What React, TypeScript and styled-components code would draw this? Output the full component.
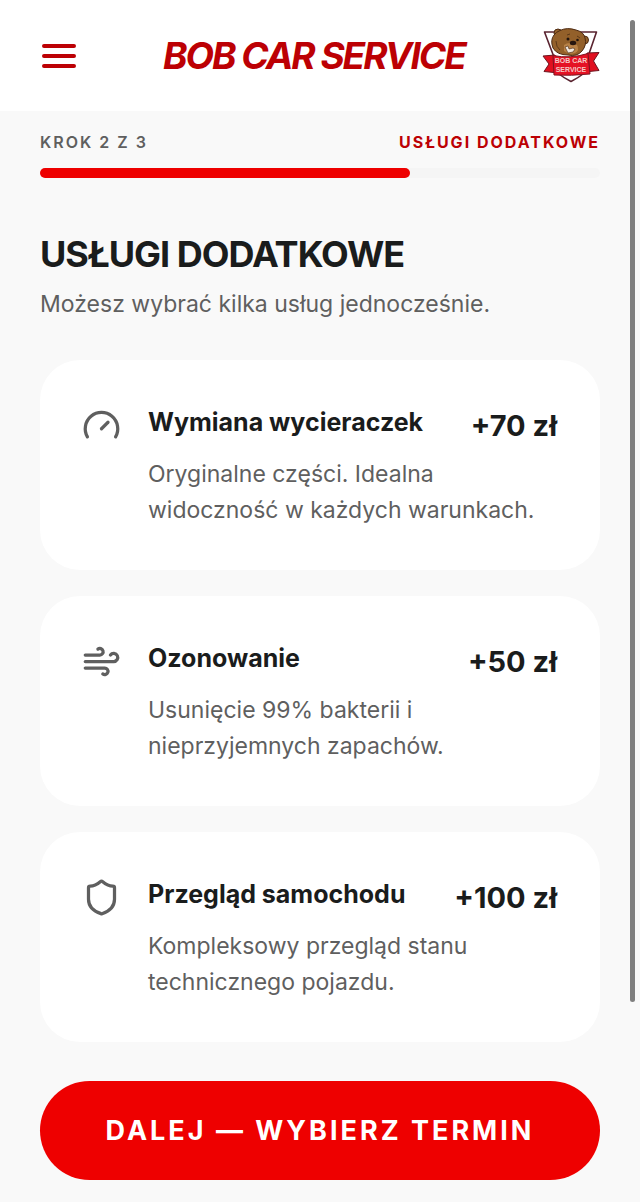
import { Gauge, LucideIcon, Shield, Wind } from 'lucide-react';
import React, { useState } from 'react';
import styled, { createGlobalStyle, ThemeProvider } from 'styled-components';

const theme = {
  colors: {
    background: '#f9f9f9',
    surface: '#ffffff',
    track: '#f5f5f5',
    primary: '#ee0000',
    primary_dark: '#bc0004',
    text: '#1a1c1c',
    muted: '#5f5f5f',
    thumb: '#7f7f7f',
  },
};

interface Service {
  id: string;
  icon: LucideIcon;
  name: string;
  description: string;
  price: number;
}

const services: Service[] = [
  {
    id: 'wipers',
    icon: Gauge,
    name: 'Wymiana wycieraczek',
    description: 'Oryginalne części. Idealna widoczność w każdych warunkach.',
    price: 70,
  },
  {
    id: 'ozone',
    icon: Wind,
    name: 'Ozonowanie',
    description: 'Usunięcie 99% bakterii i nieprzyjemnych zapachów.',
    price: 50,
  },
  {
    id: 'inspection',
    icon: Shield,
    name: 'Przegląd samochodu',
    description: 'Kompleksowy przegląd stanu technicznego pojazdu.',
    price: 100,
  },
];

const MenuIcon = () => (
  <svg width="38" height="26" viewBox="0 0 38 26" aria-hidden="true">
    <path
      d="M4 3h30M4 13h30M4 23h30"
      stroke="currentColor"
      strokeWidth="4"
      strokeLinecap="round"
    />
  </svg>
);

const BearLogo = () => (
  <svg width="58" height="56" viewBox="0 0 58 56" role="img" aria-label="Bob Car Service">
    <path
      d="M2.500 4H54.500L44.500 33 41 46Q36 50 29 53.500Q22 50 17 46L13.500 33Z"
      fill="#fff"
      stroke="#5a2430"
      strokeWidth="1.600"
      strokeLinejoin="round"
    />
    <path
      d="M13 27L1 28 7 36 2 43.500 17 45ZM45 25L57 24.500 51.500 33 57 42.500 42 44Z"
      fill="#e0101f"
      stroke="#6b1620"
      strokeWidth="1"
      strokeLinejoin="round"
    />
    <path d="M11 27.500Q28 31 46 25.500L48 46Q29 48 12 47Z" fill="#e51224" stroke="#7d1420" strokeWidth="1" />
    <g stroke="#4d2a12" strokeWidth="1">
      <circle cx="16" cy="5" r="4" fill="#96622b" />
      <circle cx="42.500" cy="12" r="4" fill="#96622b" />
      <path
        d="M18 2.500Q25-1 34 2Q42 4 43 10Q45 17 40 23Q35 29 26 27Q15 27 11 20Q8 12 12 7Q14 4 18 2.500Z"
        fill="#93602a"
      />
    </g>
    <path d="M22 17Q27 13 35 17Q38 22 33 25Q27 27 22 23Z" fill="#b88247" />
    <ellipse cx="31" cy="15" rx="3.200" ry="2.200" fill="#27160f" />
    <circle cx="26" cy="11" r="1.500" fill="#21130d" />
    <circle cx="35.500" cy="12" r="1.300" fill="#21130d" />
    <path d="M25 7l3-1M35 8l3 2M14 13q0 6 4 9" stroke="#5c3818" strokeWidth="1" fill="none" />
    <path d="M23 19l3-1 1 3 4-1 2 1-2 3-5 1z" fill="#f2e9df" stroke="#44230f" strokeWidth="0.600" />
    <LogoText x="29" y="35">BOB CAR</LogoText>
    <LogoText x="29" y="44">SERVICE</LogoText>
  </svg>
);

const ServiceCard = ({
  service,
  selected,
  onToggle,
}: {
  service: Service;
  selected: boolean;
  onToggle: () => void;
}) => {
  const Icon = service.icon;

  return (
    <Card type="button" aria-pressed={selected} $selected={selected} onClick={onToggle}>
      <IconCell>
        <Icon size={39} />
      </IconCell>
      <Name>{service.name}</Name>
      <Price>+{service.price} zł</Price>
      <Description>{service.description}</Description>
    </Card>
  );
};

const App = () => {
  const [selected, setSelected] = useState<string[]>([]);

  const handleToggle = (id: string) => {
    setSelected((prev) => (prev.includes(id) ? prev.filter((item) => item !== id) : [...prev, id]));
  };

  const handleSubmit = (e: React.FormEvent<HTMLFormElement>) => {
    e.preventDefault();
  };

  return (
    <ThemeProvider theme={theme}>
      <GlobalStyle />
      <Header>
        <MenuButton type="button" aria-label="Menu">
          <MenuIcon />
        </MenuButton>
        <Brand>BOB CAR SERVICE</Brand>
        <BearLogo />
      </Header>
      <Main>
        <Steps>
          <Step>KROK 2 Z 3</Step>
          <Step $active>USŁUGI DODATKOWE</Step>
        </Steps>
        <Track>
          <Progress />
        </Track>
        <Title>USŁUGI DODATKOWE</Title>
        <Subtitle>Możesz wybrać kilka usług jednocześnie.</Subtitle>
        <form onSubmit={handleSubmit}>
          <CardList>
            {services.map((service) => (
              <ServiceCard
                key={service.id}
                service={service}
                selected={selected.includes(service.id)}
                onToggle={() => handleToggle(service.id)}
              />
            ))}
          </CardList>
          <NextButton type="submit">DALEJ — WYBIERZ TERMIN</NextButton>
        </form>
      </Main>
      <ScrollThumb />
    </ThemeProvider>
  );
};

const GlobalStyle = createGlobalStyle`
  * {
    box-sizing: border-box;
    margin: 0;
  }

  body {
    background-color: ${theme.colors.background};
    font-family: Inter, 'Liberation Sans', sans-serif;
    color: ${theme.colors.text};
  }

  button {
    border: none;
    font-family: inherit;
    color: inherit;
    cursor: pointer;
  }
`;

const Header = styled.header`
  display: flex;
  align-items: center;
  justify-content: space-between;
  height: 111px;
  padding: 0 40px;
  background-color: ${({ theme }) => theme.colors.surface};
`;

const MenuButton = styled.button`
  display: flex;
  padding: 0;
  background: none;
  color: ${({ theme }) => theme.colors.primary_dark};
`;

const Brand = styled.p`
  padding-left: 8px;
  font-size: 37px;
  font-style: italic;
  font-weight: 700;
  line-height: 48px;
  letter-spacing: -2px;
  color: ${({ theme }) => theme.colors.primary_dark};
`;

const LogoText = styled.text`
  font-family: 'Liberation Sans Narrow', 'Liberation Sans', sans-serif;
  font-size: 7px;
  font-weight: 700;
  text-anchor: middle;
  fill: #f6c9c4;
`;

const Main = styled.main`
  padding: 21px 40px;
`;

const Steps = styled.div`
  display: flex;
  justify-content: space-between;
  margin-bottom: 16px;
`;

const Step = styled.span<{ $active?: boolean }>`
  font-size: 16px;
  font-weight: ${({ $active }) => ($active ? 700 : 600)};
  line-height: 20px;
  letter-spacing: 2px;
  color: ${({ theme, $active }) => ($active ? theme.colors.primary_dark : theme.colors.muted)};
`;

const Track = styled.div`
  height: 10px;
  border-radius: 5px;
  background-color: ${({ theme }) => theme.colors.track};
`;

const Progress = styled.div`
  width: 66%;
  height: 100%;
  border-radius: 5px;
  background-color: ${({ theme }) => theme.colors.primary};
`;

const Title = styled.h1`
  margin: 52px 0 8px;
  font-size: 36px;
  font-weight: 700;
  line-height: 48px;
  letter-spacing: -1px;
`;

const Subtitle = styled.p`
  margin-bottom: 38px;
  font-size: 23px;
  line-height: 36px;
  color: ${({ theme }) => theme.colors.muted};
`;

const CardList = styled.div`
  display: flex;
  flex-direction: column;
  gap: 26px;
`;

const Card = styled.button<{ $selected: boolean }>`
  display: grid;
  grid-template-columns: 39px 1fr auto;
  column-gap: 27px;
  row-gap: 8px;
  width: 100%;
  padding: 44px 43px 42px 42px;
  border-radius: 40px;
  background-color: ${({ theme }) => theme.colors.surface};
  box-shadow: ${({ theme, $selected }) =>
    $selected ? `inset 0 0 0 3px ${theme.colors.primary}` : 'none'};
  text-align: left;
`;

const IconCell = styled.span`
  display: flex;
  align-items: center;
  height: 42px;
  color: ${({ theme }) => theme.colors.muted};
`;

const Name = styled.span`
  font-size: 25px;
  font-weight: 700;
  line-height: 36px;
`;

const Price = styled.span`
  font-size: 29px;
  font-weight: 700;
  line-height: 44px;
  white-space: nowrap;
`;

const Description = styled.span`
  grid-column: 2 / 4;
  font-size: 23px;
  line-height: 36px;
  color: ${({ theme }) => theme.colors.muted};
`;

const NextButton = styled.button`
  width: 100%;
  height: 99px;
  margin-top: 39px;
  border-radius: 50px;
  background-color: ${({ theme }) => theme.colors.primary};
  font-size: 27px;
  font-weight: 700;
  letter-spacing: 3px;
  color: ${({ theme }) => theme.colors.surface};

  &:hover {
    opacity: 0.9;
  }
`;

// overlay scrollbar, drawn above the page
const ScrollThumb = styled.div`
  position: fixed;
  top: 20px;
  right: 5px;
  width: 5px;
  height: 982px;
  border-radius: 3px;
  background-color: ${({ theme }) => theme.colors.thumb};
`;

export default App;
